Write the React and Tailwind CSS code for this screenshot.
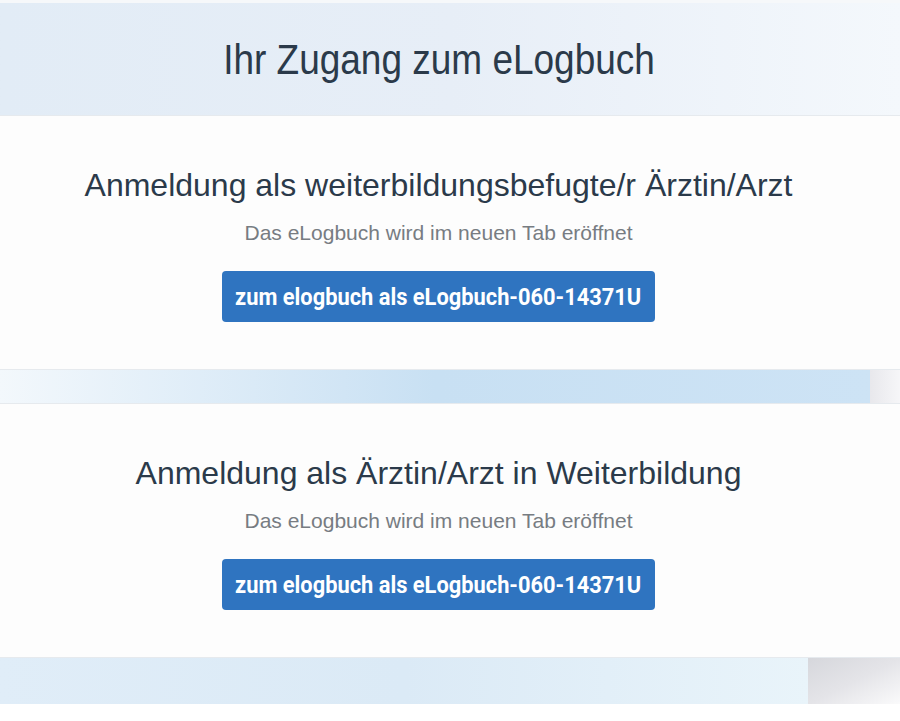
// Zugangsseite zum eLogbuch
const accounts = [
  {
    title: "Anmeldung als weiterbildungsbefugte/r Ärztin/Arzt",
    label: "zum elogbuch als eLogbuch-060-14371U",
  },
  {
    title: "Anmeldung als Ärztin/Arzt in Weiterbildung",
    label: "zum elogbuch als eLogbuch-060-14371U",
  },
];

const LoginCard = ({ title, label }) => (
  <section className="flex flex-col items-center bg-[#fdfdfd] pr-[23px] pt-[49px] h-[255px] border-y border-[#e6eaee]">
    <h2 className="text-[32px] leading-[40px] text-[#2b3a4a] font-['Liberation_Sans',sans-serif]">
      {title}
    </h2>
    <p className="mt-[15px] text-[21px] leading-[26px] text-[#777c82] font-['Liberation_Sans',sans-serif]">
      Das eLogbuch wird im neuen Tab eröffnet
    </p>
    <button className="mt-[25px] w-[433px] h-[51px] flex items-center justify-center rounded-[4px] bg-[#2f74c0] text-white text-[24px] font-bold font-['Roboto',sans-serif]">
      <span className="inline-block whitespace-nowrap scale-x-[0.91]">{label}</span>
    </button>
  </section>
);

export default function App() {
  return (
    <div className="w-[900px] h-[721px] bg-white overflow-hidden">
      <div className="h-[3px] bg-[#f6f8fa]" />
      <header className="h-[112px] pr-[23px] flex items-center justify-center bg-gradient-to-r from-[#e2ecf6] via-[#e7eef7] to-[#f4f8fc]">
        <h1 className="text-[43px] text-[#2b3a4a] font-['Liberation_Sans',sans-serif] scale-x-[0.86]">
          Ihr Zugang zum eLogbuch
        </h1>
      </header>
      <LoginCard {...accounts[0]} />
      <div className="h-[33px] flex">
        <div className="flex-1 bg-gradient-to-r from-[#f3f8fc] via-[#c8e0f3] to-[#cde3f5]" />
        <div className="w-[30px] bg-gradient-to-r from-[#e8e8ec] to-[#f6f6f8]" />
      </div>
      <LoginCard {...accounts[1]} />
      <div className="h-[46px] flex">
        <div className="flex-1 bg-gradient-to-r from-[#e0edf8] via-[#dbeaf6] to-[#e9f4fa]" />
        <div className="w-[92px] bg-gradient-to-br from-[#d6d7dc] via-[#e4e4e8] to-[#fafafb]" />
      </div>
      <div className="h-[16px] bg-white" />
    </div>
  );
}
